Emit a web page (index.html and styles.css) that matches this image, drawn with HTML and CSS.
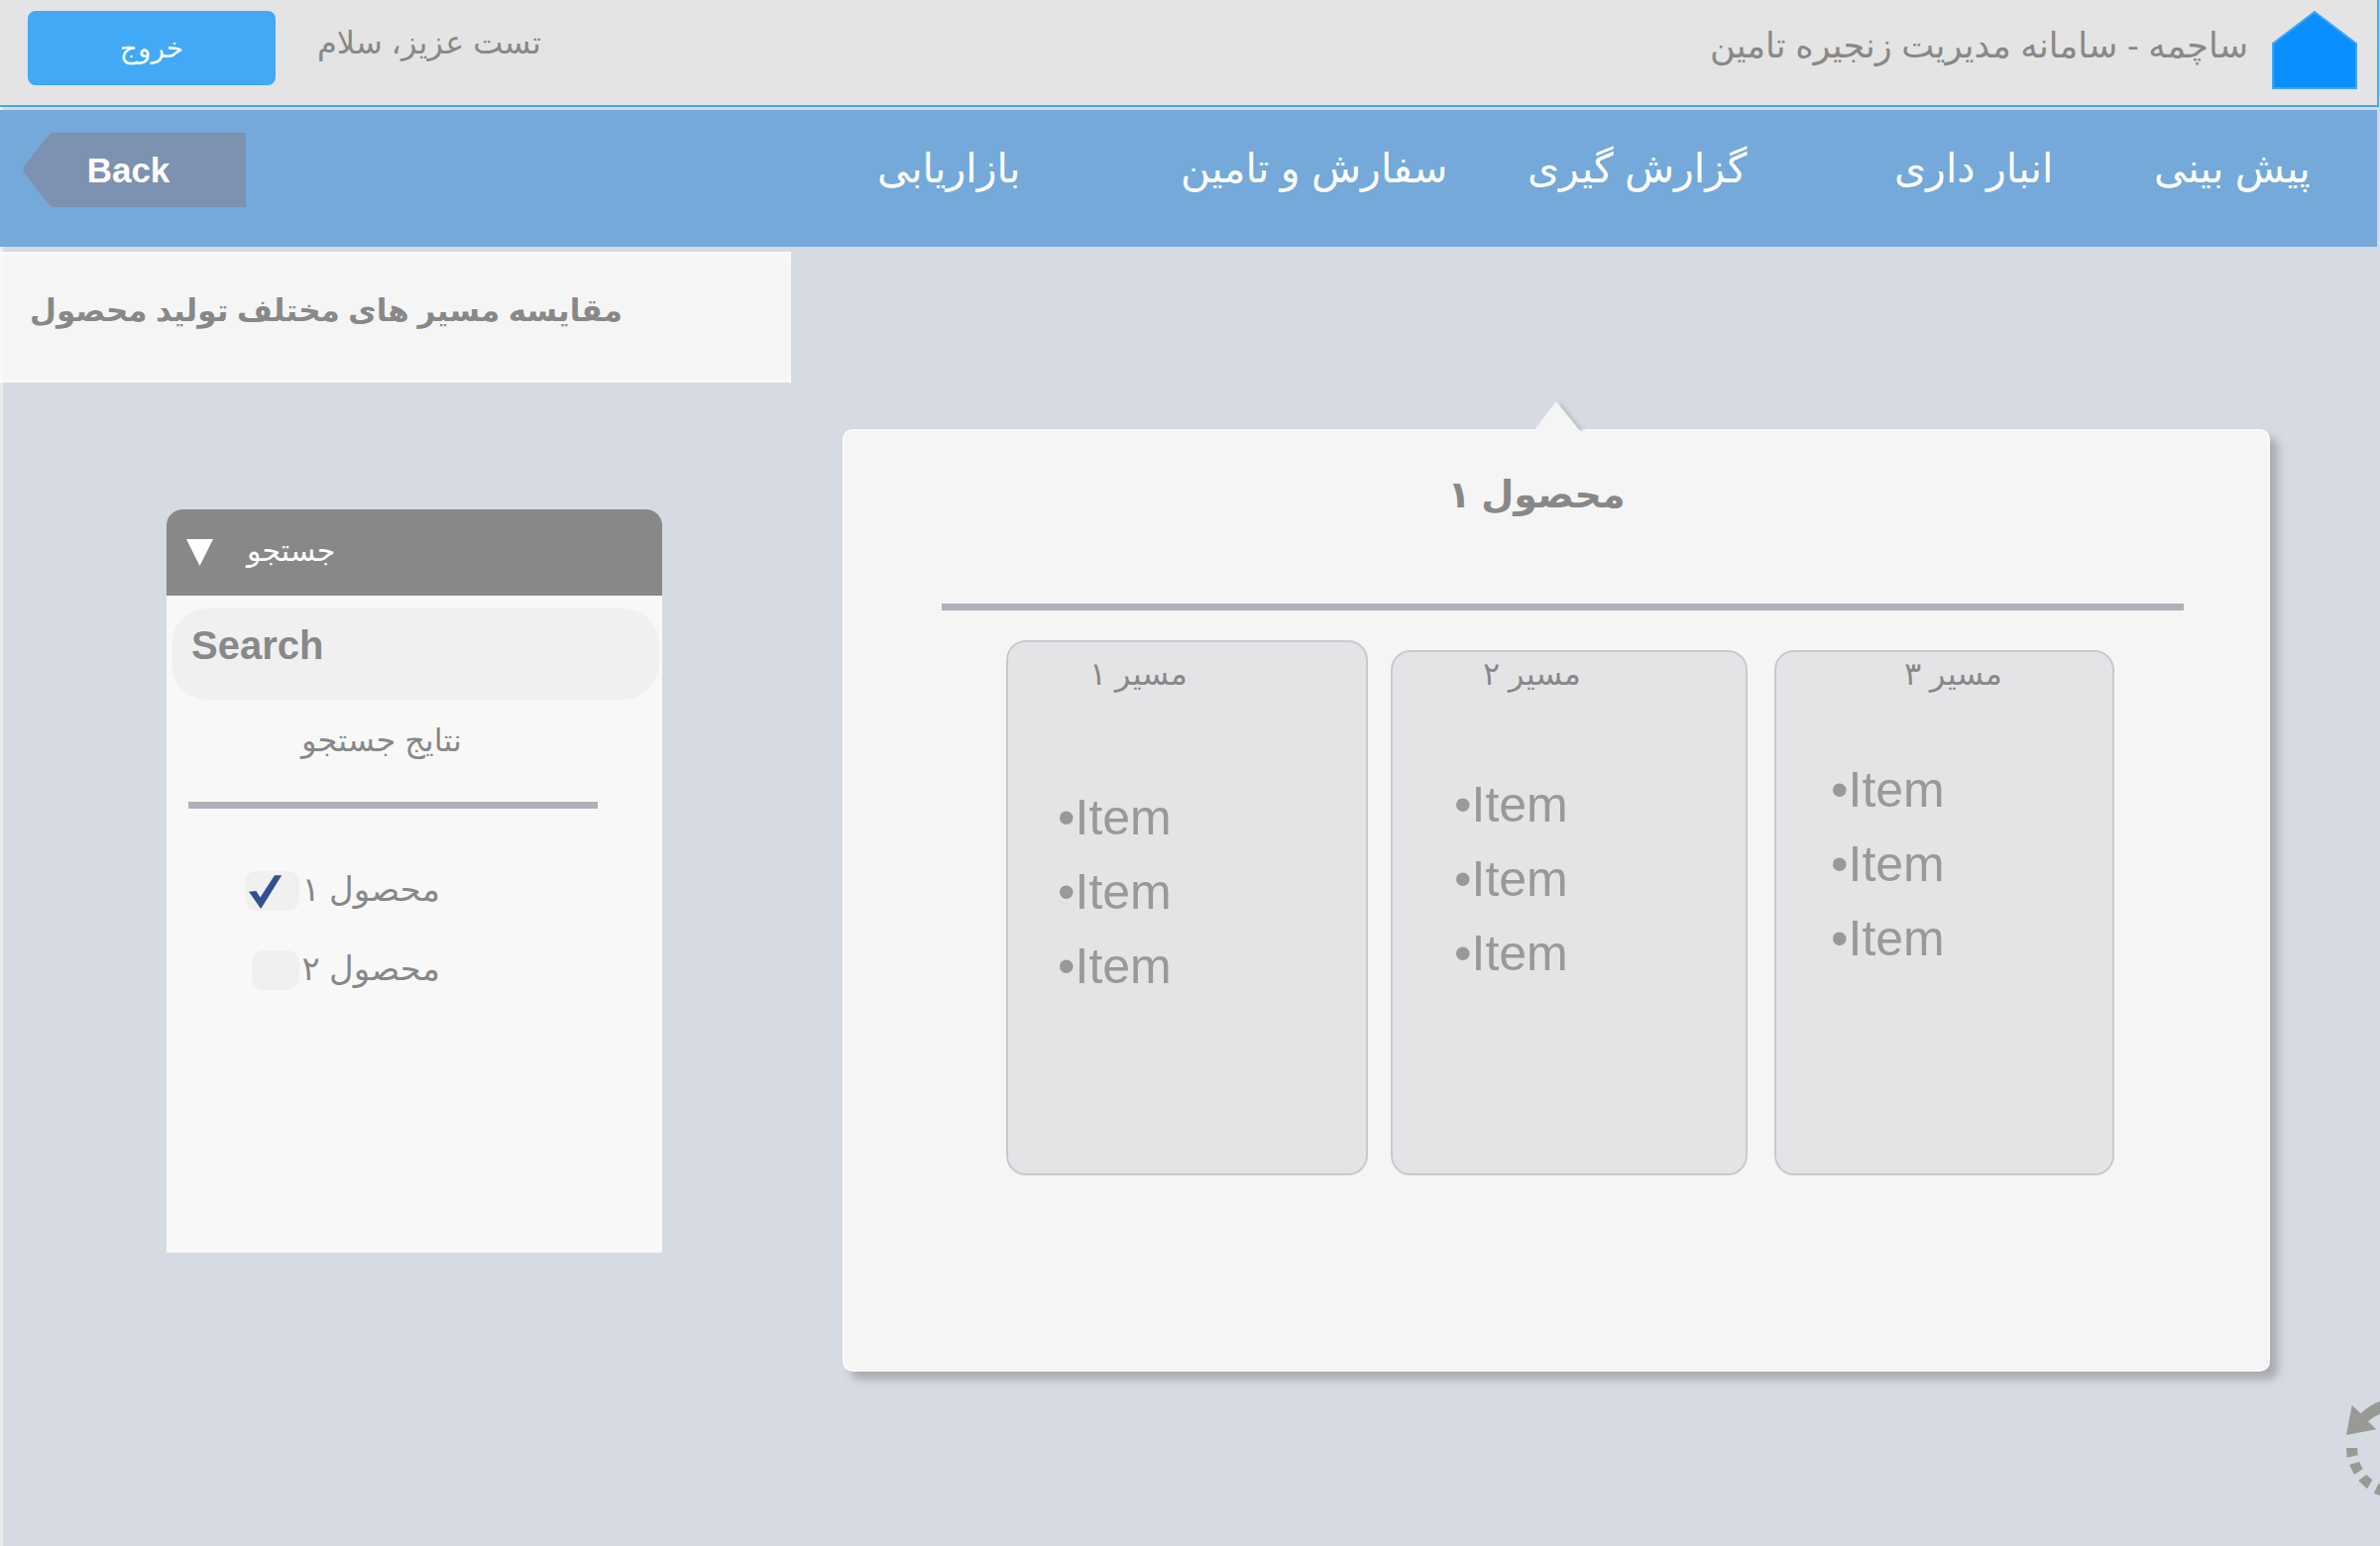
FILE: index.html
```html
<!DOCTYPE html>
<html lang="fa">
<head>
<meta charset="utf-8">
<title>ساچمه - سامانه مدیریت زنجیره تامین</title>
<link rel="stylesheet" href="styles.css">
</head>
<body>
<header class="topbar">
  <button class="logout" type="button" dir="rtl">خروج</button>
  <span class="greeting" dir="rtl">تست عزیز، سلام</span>
  <span class="brand" dir="rtl">ساچمه - سامانه مدیریت زنجیره تامین</span>
  <a class="home" href="#" aria-label="خانه">
    <svg width="86" height="79" viewBox="0 0 86 79"><path d="M43 1 85 33V78H1V33Z" fill="#0a8fff" stroke="#41a5f5" stroke-width="2"/></svg>
  </a>
</header>
<nav class="menu">
  <button class="back" type="button">
    <svg class="back-shape" viewBox="0 0 225 75" preserveAspectRatio="none"><path d="M29 0H225V75H29Q24 70 2 41Q-1 37 2 33Q24 4 29 0Z" fill="#7d92b0"/></svg>
    <span class="back-text">Back</span>
  </button>
  <div class="links">
    <a href="#" dir="rtl">بازاریابی</a>
    <a href="#" dir="rtl">سفارش و تامین</a>
    <a href="#" dir="rtl">گزارش گیری</a>
    <a href="#" dir="rtl">انبار داری</a>
    <a href="#" dir="rtl">پیش بینی</a>
  </div>
</nav>
<main>
  <h1 class="page-title"><span dir="rtl">مقایسه مسیر های مختلف تولید محصول</span></h1>
  <div class="workspace">
    <aside class="search-panel">
      <h2 class="panel-head">
        <svg width="27" height="27" viewBox="0 0 27 27"><path d="M0 0H27L13.500 27Z" fill="#fff"/></svg>
        <span dir="rtl">جستجو</span>
      </h2>
      <input class="search-box" type="text" placeholder="Search" aria-label="Search">
      <h3 class="results-title"><span dir="rtl">نتایج جستجو</span></h3>
      <hr class="rule">
      <div class="options">
        <label class="option"><input type="checkbox" class="tick tick-wide" checked><span dir="rtl">محصول ۱</span></label>
        <label class="option"><input type="checkbox" class="tick"><span dir="rtl">محصول ۲</span></label>
      </div>
    </aside>
    <section class="card">
      <svg class="pointer" width="60" height="32" viewBox="0 0 60 32"><path d="M6 32 30 1 55 32Z" fill="#f5f5f5"/></svg>
      <h2 class="card-title"><span dir="rtl">محصول ۱</span></h2>
      <hr class="rule">
      <div class="routes">
        <article class="route route-one">
          <h3><span dir="rtl">مسیر ۱</span></h3>
          <ul><li>•Item</li><li>•Item</li><li>•Item</li></ul>
        </article>
        <article class="route route-two">
          <h3><span dir="rtl">مسیر ۲</span></h3>
          <ul><li>•Item</li><li>•Item</li><li>•Item</li></ul>
        </article>
        <article class="route route-three">
          <h3><span dir="rtl">مسیر ۳</span></h3>
          <ul><li>•Item</li><li>•Item</li><li>•Item</li></ul>
        </article>
      </div>
    </section>
  </div>
  <div class="tools">
    <button class="undo" type="button" aria-label="بازگشت">
      <svg width="34" height="105" viewBox="0 0 34 105" fill="#999996"><path d="M0 38 5.700 8 14.700 16.300Q23 8 34 4V16.700Q27 19.500 22 24.300L30.300 32.300Z"/><path d="M0 51H11L11.700 58.300 .7 60.700Z"/><path d="M3 68 13 65 16.700 72.300 8 78Z"/><path d="M12.300 84 20.300 78 26.300 83.300 21 92.300Z"/><path d="M34 86.700 32.300 87.300 27.700 96.700 34 99.300Z"/></svg>
    </button>
  </div>
</main>
</body>
</html>
```
FILE: styles.css
```css
* { box-sizing: border-box; margin: 0; padding: 0; }
body {
  min-height: 100vh;
  font-family: "Liberation Sans", "DejaVu Sans", sans-serif;
  color: #888;
  background: linear-gradient(to right, #ebecee 3px, #d6dae2 3px);
  overflow-x: hidden;
}
button { border: 0; background: none; font: inherit; cursor: pointer; }
h1, h2, h3 { font-weight: normal; }
a { text-decoration: none; }
svg { display: block; }

.topbar {
  display: flex;
  align-items: flex-start;
  height: 108px;
  margin-right: 1px;
  padding: 11px 20px 0 28px;
  background: #e4e4e4;
  border-right: 2px solid #41a9f6;
  border-bottom: 2px solid #41a9f6;
}
.logout { width: 250px; height: 75px; border-radius: 8px; background: #41a9f6; color: #fff; font-size: 28px; }
.greeting { margin-left: 42px; font-size: 32px; line-height: 64px; }
.brand { margin-left: auto; font-size: 35px; line-height: 70px; }
.home { margin-left: 24px; }

.menu {
  display: flex;
  align-items: flex-start;
  margin: 3px 3px 0 0;
  padding: 23px 0 40px 23px;
  background: #74a9d9;
}
.back { display: grid; width: 225px; height: 75px; color: #fff; font-size: 35px; font-weight: bold; align-items: center; }
.back-shape { grid-area: 1 / 1; width: 100%; height: 75px; }
.back-text { grid-area: 1 / 1; padding-right: 12px; }
.links { flex: 1; display: grid; grid-template-columns: 637fr 306fr 350fr 370fr 262fr 225fr; }
.links a { color: #fff; font-size: 41px; line-height: 72px; text-align: left; white-space: nowrap; }
.links a:first-child { grid-column: 2; }

.page-title {
  width: 33%;
  min-width: 798px;
  margin-top: 5px;
  padding: 0 0 12px 30px;
  background: #f5f5f5;
  box-shadow: inset 0 0 6px #fff;
  font-size: 31px;
  line-height: 120px;
  font-weight: bold;
  white-space: nowrap;
}
.workspace { display: grid; grid-template-columns: 168fr 500fr 182fr 1440fr 111fr; align-items: start; }
.rule { border: 0; height: 7px; background: #b0b0ba; }

.search-panel { grid-column: 2; min-height: 750px; margin-top: 128px; background: #f8f8f8; border-radius: 16px 16px 0 0; }
.panel-head {
  display: flex;
  align-items: center;
  gap: 34px;
  height: 87px;
  padding-left: 20px;
  border-radius: 16px 16px 0 0;
  background: #888;
  color: #fff;
  font-size: 30px;
  line-height: 80px;
}
.panel-head span { padding-bottom: 4px; }
.search-box {
  display: block;
  width: calc(100% - 8px);
  height: 92px;
  margin: 13px 3px 0 5px;
  padding: 0 20px 18px;
  border: 0;
  border-radius: 36px;
  background: #f0f0f0;
  color: #888;
  font: bold 40px "Liberation Sans", sans-serif;
}
.search-box::placeholder { color: #888; opacity: 1; }
.results-title { padding: 9px 202px 3px 0; text-align: right; font-size: 32px; line-height: 64px; }
.search-panel .rule { margin: 27px 65px 0 22px; }
.options { width: 276px; padding-top: 43px; }
.option { display: flex; justify-content: flex-end; align-items: center; gap: 2px; height: 80px; font-size: 34px; white-space: nowrap; }
.option span { padding-bottom: 4px; }
.tick { appearance: none; width: 48px; height: 40px; border-radius: 12px; background: #f0f0f0; }
.tick-wide { width: 55px; }
.tick:checked {
  background: #f0f0f0 url("data:image/svg+xml,%3Csvg xmlns='http://www.w3.org/2000/svg' width='55' height='40'%3E%3Cpath d='M4 20.800 11.400 20 15.500 26.600 30 4.300H37.200L16.200 38Z' fill='%23305090'/%3E%3C/svg%3E") no-repeat;
}

.card {
  position: relative;
  grid-column: 4;
  min-height: 951px;
  margin-top: 47px;
  border: 2px solid #fbfbfb;
  border-radius: 10px;
  background: #f5f5f5;
  box-shadow: 8px 8px 8px #a9acb0;
}
.pointer { position: absolute; left: 50%; top: -31px; margin-left: -30px; filter: drop-shadow(4px 2px 2px #b4b7bb); clip-path: inset(0 0 1px 0); }
.card-title { padding: 24px 40px 0 0; text-align: center; font-size: 38px; line-height: 80px; font-weight: bold; }
.card .rule { margin: 70px 85px 0 98px; }
.routes { display: grid; grid-template-columns: 163fr 365fr 23fr 360fr 27fr 343fr 155fr; padding-top: 30px; align-items: end; }
.route { min-height: 530px; border: 2px solid #c9c9d0; border-radius: 20px; background: #e4e4e6; }
.route h3 { font-size: 32px; line-height: 44px; text-align: right; }
.route ul { list-style: none; color: #999; font-size: 50px; line-height: 75px; }
.route-one { grid-column: 2; min-height: 540px; }
.route-one h3 { padding: 10px 180px 0 0; }
.route-one ul { padding: 86px 0 0 50px; }
.route-two { grid-column: 4; }
.route-two h3 { padding-right: 166px; }
.route-two ul { padding: 73px 0 0 62px; }
.route-three { grid-column: 6; }
.route-three h3 { padding-right: 111px; }
.route-three ul { padding: 58px 0 0 55px; }

.tools { display: flex; justify-content: flex-end; padding-top: 26px; }
```
